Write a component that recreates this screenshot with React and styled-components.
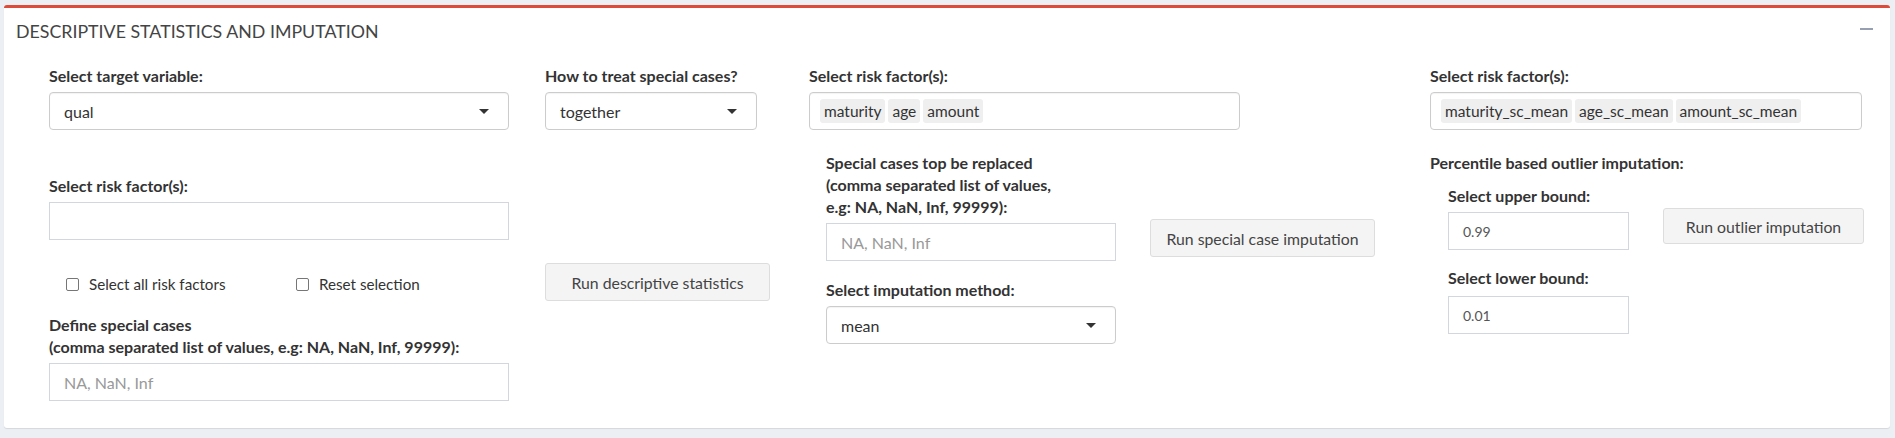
import React from 'react';
import styled, { createGlobalStyle } from 'styled-components';

const GlobalStyle = createGlobalStyle`
  html, body {
    margin: 0;
    padding: 0;
    background: #ecf0f5;
  }
  body {
    font-family: Lato, 'Liberation Sans', sans-serif;
    color: #333;
  }
`;

const Page = styled.div`
  padding: 5px 5px 7px 4px;
`;

const Box = styled.div`
  background: #fff;
  border-top: 3px solid #dd4b39;
  border-radius: 3px;
  box-shadow: 0 1px 1px rgba(0, 0, 0, 0.1);
  height: 423px;
  box-sizing: border-box;
`;

const BoxHeader = styled.div`
  display: flex;
  align-items: center;
  justify-content: space-between;
  padding: 10px 17px 0 12px;
  height: 36px;
  box-sizing: border-box;
`;

const BoxTitle = styled.h3`
  margin: 0;
  font-size: 17.8px;
  line-height: 22px;
  font-weight: 400;
  color: #444;
`;

const CollapseButton = styled.span`
  display: block;
  width: 13px;
  height: 2px;
  background: #97a0b3;
  margin-top: -4px;
`;

const BoxBody = styled.div`
  display: flex;
  align-items: flex-start;
  padding: 21px 0 0 45px;
`;

const Column = styled.div`
  display: flex;
  flex-direction: column;
  width: ${(p) => p.$width}px;
  margin-left: ${(p) => p.$gap || 0}px;
  flex-shrink: 0;
`;

const Label = styled.label`
  display: block;
  font-size: 16px;
  line-height: 22px;
  font-weight: 700;
  color: #333;
  margin-top: ${(p) => p.$top || 0}px;
  margin-bottom: ${(p) => p.$bottom ?? 5}px;
  white-space: nowrap;
`;

const SelectBox = styled.div`
  position: relative;
  box-sizing: border-box;
  width: ${(p) => (p.$width ? `${p.$width}px` : '100%')};
  height: 38px;
  border: 1px solid #ccc;
  border-radius: 4px;
  background: #fff;
  display: flex;
  align-items: center;
  padding: 0 14px;
  font-size: 16px;
  color: #333;
  box-shadow: inset 0 1px 1px rgba(0, 0, 0, 0.05);
`;

const Caret = styled.span`
  position: absolute;
  right: 19px;
  top: 16px;
  width: 0;
  height: 0;
  border-left: 5.5px solid transparent;
  border-right: 5.5px solid transparent;
  border-top: 5.5px solid #333;
`;

const TagBox = styled(SelectBox)`
  padding: 0 10px;
  gap: 3px;
`;

const Tag = styled.span`
  background: #efefef;
  border-radius: 3px;
  height: 24px;
  line-height: 24px;
  padding: 0 4px;
  font-size: 15.5px;
  color: #333;
`;

const TextInput = styled.div`
  box-sizing: border-box;
  width: ${(p) => (p.$width ? `${p.$width}px` : '100%')};
  height: 38px;
  border: 1px solid #d2d6de;
  background: #fff;
  display: flex;
  align-items: center;
  padding: 0 14px;
  font-size: ${(p) => (p.$small ? 14 : 16)}px;
  color: ${(p) => (p.$placeholder ? '#999' : '#555')};
`;

const Button = styled.div`
  box-sizing: border-box;
  width: ${(p) => p.$width}px;
  height: ${(p) => p.$height || 38}px;
  margin-top: ${(p) => p.$top || 0}px;
  background: #f4f4f4;
  border: 1px solid #ddd;
  border-radius: 3px;
  color: #444;
  font-size: 15.8px;
  display: flex;
  align-items: center;
  justify-content: center;
  flex-shrink: 0;
`;

const CheckRow = styled.div`
  display: flex;
  padding-left: 17px;
  margin-top: 33px;
  height: 22px;
  align-items: center;
`;

const CheckItem = styled.label`
  display: flex;
  align-items: center;
  width: 230px;
  flex-shrink: 0;
  font-size: 15.2px;
  color: #333;
`;

const CheckBox = styled.span`
  display: inline-block;
  box-sizing: border-box;
  width: 13px;
  height: 13px;
  border: 1px solid #767676;
  border-radius: 2px;
  background: #fff;
  margin-right: 10px;
`;

const SubRow = styled.div`
  display: flex;
  align-items: flex-start;
  padding-left: ${(p) => p.$indent}px;
  gap: 34px;
`;

const SubColumn = styled.div`
  display: flex;
  flex-direction: column;
  width: ${(p) => p.$width}px;
  flex-shrink: 0;
`;

function Select({ value, width }) {
  return (
    <SelectBox $width={width}>
      {value}
      <Caret />
    </SelectBox>
  );
}

function Tags({ items, width }) {
  return (
    <TagBox $width={width}>
      {items.map((t) => (
        <Tag key={t}>{t}</Tag>
      ))}
    </TagBox>
  );
}

export default function App() {
  return (
    <>
      <GlobalStyle />
      <Page>
        <Box>
          <BoxHeader>
            <BoxTitle>DESCRIPTIVE STATISTICS AND IMPUTATION</BoxTitle>
            <CollapseButton />
          </BoxHeader>
          <BoxBody>
            <Column $width={460}>
              <Label>Select target variable:</Label>
              <Select value="qual" />
              <Label $top={45}>Select risk factor(s):</Label>
              <TextInput />
              <CheckRow>
                <CheckItem>
                  <CheckBox />
                  Select all risk factors
                </CheckItem>
                <CheckItem>
                  <CheckBox />
                  Reset selection
                </CheckItem>
              </CheckRow>
              <Label $top={19}>
                Define special cases
                <br />
                (comma separated list of values, e.g: NA, NaN, Inf, 99999):
              </Label>
              <TextInput $placeholder>NA, NaN, Inf</TextInput>
            </Column>

            <Column $width={224} $gap={36}>
              <Label>How to treat special cases?</Label>
              <Select value="together" width={212} />
              <Button $width={225} $top={133}>
                Run descriptive statistics
              </Button>
            </Column>

            <Column $width={566} $gap={40}>
              <Label>Select risk factor(s):</Label>
              <Tags items={['maturity', 'age', 'amount']} width={431} />
              <SubRow $indent={17}>
                <SubColumn $width={290}>
                  <Label $top={22}>
                    Special cases top be replaced
                    <br />
                    (comma separated list of values,
                    <br />
                    e.g: NA, NaN, Inf, 99999):
                  </Label>
                  <TextInput $placeholder>NA, NaN, Inf</TextInput>
                  <Label $top={18}>Select imputation method:</Label>
                  <Select value="mean" />
                </SubColumn>
                <Button $width={225} $top={89}>
                  Run special case imputation
                </Button>
              </SubRow>
            </Column>

            <Column $width={434} $gap={55}>
              <Label>Select risk factor(s):</Label>
              <Tags
                items={['maturity_sc_mean', 'age_sc_mean', 'amount_sc_mean']}
                width={432}
              />
              <Label $top={22}>Percentile based outlier imputation:</Label>
              <SubRow $indent={18}>
                <SubColumn $width={181}>
                  <Label $top={6}>Select upper bound:</Label>
                  <TextInput $small>0.99</TextInput>
                  <Label $top={17} $bottom={7}>
                    Select lower bound:
                  </Label>
                  <TextInput $small>0.01</TextInput>
                </SubColumn>
                <Button $width={201} $height={36} $top={29}>
                  Run outlier imputation
                </Button>
              </SubRow>
            </Column>
          </BoxBody>
        </Box>
      </Page>
    </>
  );
}
